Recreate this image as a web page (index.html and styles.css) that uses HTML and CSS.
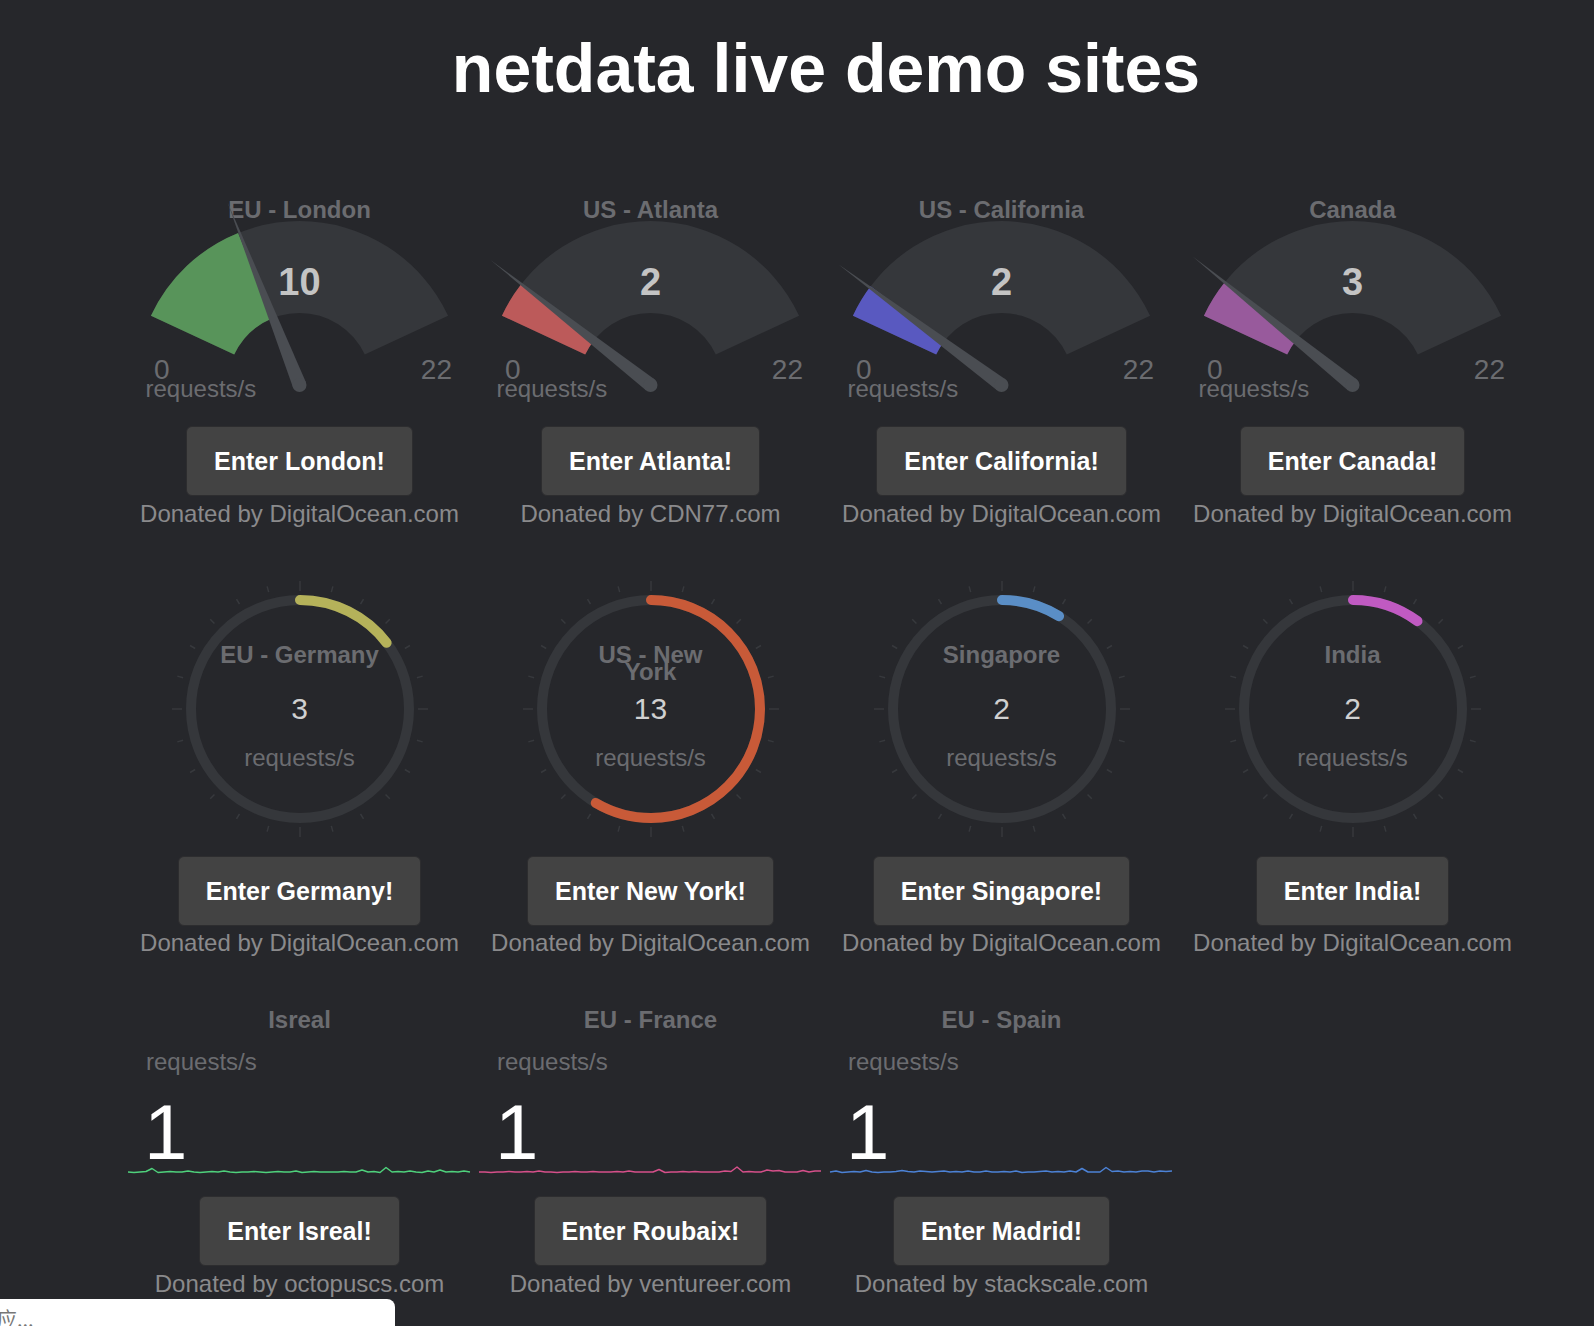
FILE: index.html
```html
<!DOCTYPE html>
<html lang="en">
<head>
<meta charset="utf-8">
<title>netdata live demo sites</title>
<link rel="stylesheet" href="styles.css">
</head>
<body>
<svg class="defs" width="0" height="0" aria-hidden="true">
  <defs>
    <g id="ticks" class="ticks">
      <line x1="135" y1="7" x2="135" y2="17"/>
      <line x1="135" y1="8" x2="135" y2="14" transform="rotate(15 135 135)"/>
      <line x1="135" y1="8" x2="135" y2="14" transform="rotate(30 135 135)"/>
      <line x1="135" y1="8" x2="135" y2="14" transform="rotate(45 135 135)"/>
      <line x1="135" y1="8" x2="135" y2="14" transform="rotate(60 135 135)"/>
      <line x1="135" y1="8" x2="135" y2="14" transform="rotate(75 135 135)"/>
      <line x1="135" y1="7" x2="135" y2="17" transform="rotate(90 135 135)"/>
      <line x1="135" y1="8" x2="135" y2="14" transform="rotate(105 135 135)"/>
      <line x1="135" y1="8" x2="135" y2="14" transform="rotate(120 135 135)"/>
      <line x1="135" y1="8" x2="135" y2="14" transform="rotate(135 135 135)"/>
      <line x1="135" y1="8" x2="135" y2="14" transform="rotate(150 135 135)"/>
      <line x1="135" y1="8" x2="135" y2="14" transform="rotate(165 135 135)"/>
      <line x1="135" y1="7" x2="135" y2="17" transform="rotate(180 135 135)"/>
      <line x1="135" y1="8" x2="135" y2="14" transform="rotate(195 135 135)"/>
      <line x1="135" y1="8" x2="135" y2="14" transform="rotate(210 135 135)"/>
      <line x1="135" y1="8" x2="135" y2="14" transform="rotate(225 135 135)"/>
      <line x1="135" y1="8" x2="135" y2="14" transform="rotate(240 135 135)"/>
      <line x1="135" y1="8" x2="135" y2="14" transform="rotate(255 135 135)"/>
      <line x1="135" y1="7" x2="135" y2="17" transform="rotate(270 135 135)"/>
      <line x1="135" y1="8" x2="135" y2="14" transform="rotate(285 135 135)"/>
      <line x1="135" y1="8" x2="135" y2="14" transform="rotate(300 135 135)"/>
      <line x1="135" y1="8" x2="135" y2="14" transform="rotate(315 135 135)"/>
      <line x1="135" y1="8" x2="135" y2="14" transform="rotate(330 135 135)"/>
      <line x1="135" y1="8" x2="135" y2="14" transform="rotate(345 135 135)"/>
    </g>
    <path id="gauge-track" d="M 26.9 91.7 A 164 164 0 0 1 324.1 91.7 L 240.8 130.6 A 72 72 0 0 0 110.2 130.6 Z"/>
  </defs>
</svg>

<main class="page">
  <h1 class="title">netdata live demo sites</h1>

  <section class="row row-gauge">
    <div class="site">
      <div class="g-title">EU - London</div>
      <svg class="gauge" viewBox="0 0 351 186" width="351" height="186">
        <use href="#gauge-track" class="track"/>
        <path class="fill-green" d="M 26.9 91.7 A 164 164 0 0 1 114.1 8.9 L 148.5 94.2 A 72 72 0 0 0 110.2 130.6 Z"/>
        <text class="g-value" x="175.5" y="71">10</text>
        <text class="g-num" x="30" y="155">0</text>
        <text class="g-num g-max" x="328" y="155">22</text>
        <text class="g-label" x="21.5" y="173">requests/s</text>
        <polygon class="needle" points="103.3,-22.3 182,158.4 169,163.6"/>
        <circle class="needle" cx="175.5" cy="161" r="7"/>
      </svg>
      <a class="btn" href="#">Enter London!</a>
      <div class="donor">Donated by DigitalOcean.com</div>
    </div>

    <div class="site">
      <div class="g-title">US - Atlanta</div>
      <svg class="gauge" viewBox="0 0 351 186" width="351" height="186">
        <use href="#gauge-track" class="track"/>
        <path class="fill-red" d="M 26.9 91.7 A 164 164 0 0 1 46.3 60.0 L 118.8 116.7 A 72 72 0 0 0 110.2 130.6 Z"/>
        <text class="g-value" x="175.5" y="71">2</text>
        <text class="g-num" x="30" y="155">0</text>
        <text class="g-num g-max" x="328" y="155">22</text>
        <text class="g-label" x="21.5" y="173">requests/s</text>
        <polygon class="needle" points="15.5,36 179.8,155.5 171.2,166.5"/>
        <circle class="needle" cx="175.5" cy="161" r="7"/>
      </svg>
      <a class="btn" href="#">Enter Atlanta!</a>
      <div class="donor">Donated by CDN77.com</div>
    </div>

    <div class="site">
      <div class="g-title">US - California</div>
      <svg class="gauge" viewBox="0 0 351 186" width="351" height="186">
        <use href="#gauge-track" class="track"/>
        <path class="fill-blue" d="M 26.9 91.7 A 164 164 0 0 1 44.5 62.3 L 118.0 117.7 A 72 72 0 0 0 110.2 130.6 Z"/>
        <text class="g-value" x="175.5" y="71">2</text>
        <text class="g-num" x="30" y="155">0</text>
        <text class="g-num g-max" x="328" y="155">22</text>
        <text class="g-label" x="21.5" y="173">requests/s</text>
        <polygon class="needle" points="12.3,40.3 179.7,155.4 171.3,166.6"/>
        <circle class="needle" cx="175.5" cy="161" r="7"/>
      </svg>
      <a class="btn" href="#">Enter California!</a>
      <div class="donor">Donated by DigitalOcean.com</div>
    </div>

    <div class="site">
      <div class="g-title">Canada</div>
      <svg class="gauge" viewBox="0 0 351 186" width="351" height="186">
        <use href="#gauge-track" class="track"/>
        <path class="fill-purple" d="M 26.9 91.7 A 164 164 0 0 1 48.1 57.8 L 119.6 115.7 A 72 72 0 0 0 110.2 130.6 Z"/>
        <text class="g-value" x="175.5" y="71">3</text>
        <text class="g-num" x="30" y="155">0</text>
        <text class="g-num g-max" x="328" y="155">22</text>
        <text class="g-label" x="21.5" y="173">requests/s</text>
        <polygon class="needle" points="15.7,32.5 179.9,155.5 171.1,166.5"/>
        <circle class="needle" cx="175.5" cy="161" r="7"/>
      </svg>
      <a class="btn" href="#">Enter Canada!</a>
      <div class="donor">Donated by DigitalOcean.com</div>
    </div>
  </section>

  <section class="row row-dial">
    <div class="site">
      <div class="dial">
        <svg class="ring" viewBox="0 0 270 270" width="270" height="270">
          <use href="#ticks"/>
          <circle class="ring-track" cx="135" cy="135" r="109"/>
          <circle class="ring-arc arc-olive" cx="135" cy="135" r="109" stroke-dasharray="100 700" transform="rotate(-90 135 135)"/>
        </svg>
        <div class="dial-text">
          <div class="d-title">EU - Germany</div>
          <div class="d-value">3</div>
          <div class="d-units">requests/s</div>
        </div>
      </div>
      <a class="btn btn-dial" href="#">Enter Germany!</a>
      <div class="donor">Donated by DigitalOcean.com</div>
    </div>

    <div class="site">
      <div class="dial">
        <svg class="ring" viewBox="0 0 270 270" width="270" height="270">
          <use href="#ticks"/>
          <circle class="ring-track" cx="135" cy="135" r="109"/>
          <circle class="ring-arc arc-orange" cx="135" cy="135" r="109" stroke-dasharray="400 700" transform="rotate(-90 135 135)"/>
        </svg>
        <div class="dial-text">
          <div class="d-title">US - New York</div>
          <div class="d-value">13</div>
          <div class="d-units">requests/s</div>
        </div>
      </div>
      <a class="btn btn-dial" href="#">Enter New York!</a>
      <div class="donor">Donated by DigitalOcean.com</div>
    </div>

    <div class="site">
      <div class="dial">
        <svg class="ring" viewBox="0 0 270 270" width="270" height="270">
          <use href="#ticks"/>
          <circle class="ring-track" cx="135" cy="135" r="109"/>
          <circle class="ring-arc arc-sky" cx="135" cy="135" r="109" stroke-dasharray="60 700" transform="rotate(-90 135 135)"/>
        </svg>
        <div class="dial-text">
          <div class="d-title">Singapore</div>
          <div class="d-value">2</div>
          <div class="d-units">requests/s</div>
        </div>
      </div>
      <a class="btn btn-dial" href="#">Enter Singapore!</a>
      <div class="donor">Donated by DigitalOcean.com</div>
    </div>

    <div class="site">
      <div class="dial">
        <svg class="ring" viewBox="0 0 270 270" width="270" height="270">
          <use href="#ticks"/>
          <circle class="ring-track" cx="135" cy="135" r="109"/>
          <circle class="ring-arc arc-magenta" cx="135" cy="135" r="109" stroke-dasharray="69 700" transform="rotate(-90 135 135)"/>
        </svg>
        <div class="dial-text">
          <div class="d-title">India</div>
          <div class="d-value">2</div>
          <div class="d-units">requests/s</div>
        </div>
      </div>
      <a class="btn btn-dial" href="#">Enter India!</a>
      <div class="donor">Donated by DigitalOcean.com</div>
    </div>
  </section>

  <section class="row row-spark">
    <div class="site">
      <div class="g-title">Isreal</div>
      <div class="spark-head">
        <div class="s-units">requests/s</div>
        <div class="s-value">1</div>
      </div>
      <svg class="spark" viewBox="0 0 351 14" width="351" height="14">
        <polyline class="line-green" points="4,5 10,5.5 16,5 22,4.5 28,1.5 34,5.5 40,5 46,4.5 52,5 58,5 64,4 70,5 76,5.5 82,5 88,4.5 94,5 100,4 106,5 112,5.5 118,5 124,5 130,4.5 136,5 142,5.5 148,5 154,4.5 160,5 166,5 172,4 178,5.5 184,5 190,4.5 196,5 202,5 208,5 214,5 220,4.5 226,5 232,5 238,3 244,5 250,4.5 256,5.5 262,0.5 268,5 274,4.5 280,5 286,4 292,5 298,5.5 304,4 310,5 316,3 322,5 328,4.5 334,5 340,4 346,5"/>
      </svg>
      <a class="btn btn-spark" href="#">Enter Isreal!</a>
      <div class="donor">Donated by octopuscs.com</div>
    </div>

    <div class="site">
      <div class="g-title">EU - France</div>
      <div class="spark-head">
        <div class="s-units">requests/s</div>
        <div class="s-value">1</div>
      </div>
      <svg class="spark" viewBox="0 0 351 14" width="351" height="14">
        <polyline class="line-pink" points="4,5 10,5 16,5.5 22,5 28,5 34,4.5 40,5 46,5 52,4.5 58,5 64,4 70,5 76,5 82,5.5 88,5 94,5 100,4.5 106,5 112,5 118,4.5 124,5 130,5 136,5 142,4.5 148,5 154,4 160,5 166,5 172,5 178,5 184,2.5 190,5.5 196,5 202,5 208,4.5 214,5 220,4.5 226,5 232,5 238,5 244,5 250,4 256,4.5 262,0 268,5 274,4.5 280,5 286,5 292,3 298,4 304,3.5 310,5 316,5 322,5 328,3.5 334,5 340,4 346,4"/>
      </svg>
      <a class="btn btn-spark" href="#">Enter Roubaix!</a>
      <div class="donor">Donated by ventureer.com</div>
    </div>

    <div class="site">
      <div class="g-title">EU - Spain</div>
      <div class="spark-head">
        <div class="s-units">requests/s</div>
        <div class="s-value">1</div>
      </div>
      <svg class="spark" viewBox="0 0 351 14" width="351" height="14">
        <polyline class="line-blue" points="4,5 10,4 16,5.5 22,5 28,4.5 34,5 40,3.5 46,5 52,5.5 58,5 64,5 70,4.5 76,3.5 82,4.5 88,5 94,4 100,4.5 106,5 112,4.5 118,4 124,5 130,4.5 136,5 142,4 148,5 154,5 160,4 166,5 172,5 178,4.5 184,5 190,4 196,5.5 202,5 208,5 214,4.5 220,4 226,5 232,4.5 238,5 244,4 250,5 256,1.5 262,5 268,5 274,5 280,0.5 286,4.5 292,4 298,5 304,4.5 310,5 316,4 322,4 328,5 334,4 340,4.5 346,4"/>
      </svg>
      <a class="btn btn-spark" href="#">Enter Madrid!</a>
      <div class="donor">Donated by stackscale.com</div>
    </div>
  </section>
</main>

<div class="toast">应...</div>
</body>
</html>
```

FILE: styles.css
```css
html, body {
  margin: 0;
  padding: 0;
}

body {
  background: #26272b;
  font-family: "Liberation Sans", Arial, Helvetica, sans-serif;
  color: #fff;
  min-height: 1326px;
}

.defs {
  position: absolute;
  width: 0;
  height: 0;
  overflow: hidden;
}

.page {
  width: 1404px;
  margin-left: 124px;
}

.title {
  margin: 28px 0 0;
  font-size: 68px;
  line-height: 80px;
  font-weight: bold;
  text-align: center;
  color: #fff;
}

.row {
  display: grid;
  grid-template-columns: repeat(4, 351px);
}

.row-gauge { margin-top: 88px; }
.row-dial  { margin-top: 46px; }
.row-spark { margin-top: 49px; }

.site {
  display: flex;
  flex-direction: column;
  align-items: center;
  width: 351px;
}

.g-title {
  font-size: 24px;
  line-height: 28px;
  font-weight: bold;
  color: #6b6c70;
  height: 28px;
  white-space: nowrap;
}

.gauge {
  display: block;
  overflow: visible;
}

.track { fill: #35373b; }
.fill-green  { fill: #58945a; }
.fill-red    { fill: #bc5a5a; }
.fill-blue   { fill: #5959c0; }
.fill-purple { fill: #985a9c; }

.needle { fill: #4a4d52; }

.g-value {
  font-family: "Liberation Sans", Arial, sans-serif;
  font-weight: bold;
  font-size: 38px;
  fill: #c4c4c4;
  text-anchor: middle;
}

.g-label {
  font-family: "Liberation Sans", Arial, sans-serif;
  font-size: 24px;
  fill: #6b6c70;
}

.g-num {
  font-family: "Liberation Sans", Arial, sans-serif;
  font-size: 28px;
  fill: #6b6c70;
}

.g-max { text-anchor: end; }

.btn {
  display: block;
  margin-top: 16px;
  padding: 19px 27px;
  background: #434343;
  border: 1px solid #2d2d2f;
  border-radius: 6px;
  color: #fff;
  font-size: 25px;
  line-height: 30px;
  font-weight: bold;
  text-decoration: none;
  white-space: nowrap;
}

.btn-dial { margin-top: 12px; }
.btn-spark { margin-top: 15px; }

.donor {
  margin-top: 4px;
  font-size: 24px;
  line-height: 28px;
  color: #8a8a8c;
  white-space: nowrap;
}

.row-dial .donor { margin-top: 3px; }

/* dials */
.dial {
  display: grid;
  width: 270px;
  height: 270px;
}

.dial > * {
  grid-area: 1 / 1;
}

.ring {
  display: block;
  overflow: visible;
}

.ticks {
  stroke: #37393d;
  stroke-width: 1.5;
}

.ring-track {
  fill: none;
  stroke: #35373b;
  stroke-width: 10;
}

.ring-arc {
  fill: none;
  stroke-width: 10;
  stroke-linecap: round;
}

.arc-olive   { stroke: #b5b25a; }
.arc-orange  { stroke: #c85a38; }
.arc-sky     { stroke: #5a8ec6; }
.arc-magenta { stroke: #c05ac2; }

.dial-text {
  display: flex;
  flex-direction: column;
  align-items: center;
  padding-top: 72px;
}

.d-title {
  width: 161px;
  height: 46px;
  font-size: 24px;
  line-height: 17px;
  font-weight: bold;
  color: #6b6c70;
  text-align: center;
}

.d-value {
  font-size: 30px;
  line-height: 34px;
  color: #d0d0d0;
}

.d-units {
  margin-top: 18px;
  font-size: 24px;
  line-height: 28px;
  color: #6b6c70;
}

/* sparklines */
.spark-head {
  align-self: stretch;
  padding-left: 22px;
}

.s-units {
  margin-top: 14px;
  font-size: 24px;
  line-height: 28px;
  color: #6b6c70;
}

.s-value {
  margin-top: 21px;
  margin-left: -2px;
  font-size: 78px;
  line-height: 70px;
  color: #fff;
}

.spark {
  display: block;
  overflow: visible;
}

.spark polyline {
  fill: none;
  stroke-width: 1.5;
  stroke-linejoin: round;
}

.line-green { stroke: #4fd17c; }
.line-pink  { stroke: #d6508a; }
.line-blue  { stroke: #4c82d6; }

/* bottom popup */
.toast {
  position: fixed;
  left: 0;
  bottom: -14px;
  width: 395px;
  height: 36px;
  padding-top: 5px;
  padding-left: 0;
  background: #fff;
  border-top-right-radius: 8px;
  font-family: "Noto Sans CJK SC", sans-serif;
  font-size: 20px;
  line-height: 29px;
  color: #777;
  text-indent: -3px;
  overflow: hidden;
}
```
